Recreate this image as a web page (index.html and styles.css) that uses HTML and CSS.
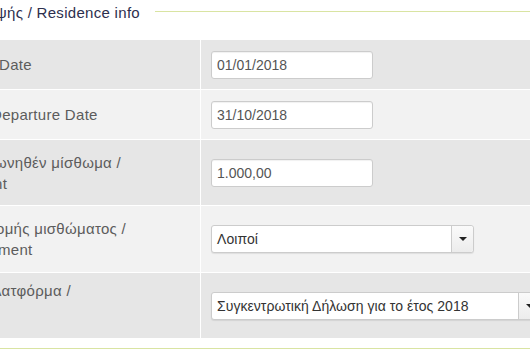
FILE: index.html
```html
<!DOCTYPE html>
<html lang="el">
<head>
<meta charset="utf-8">
<title>Residence info</title>
<link rel="stylesheet" href="styles.css">
</head>
<body>
<div class="page">
  <div class="legend">
    <span class="legend-text">ψής / Residence info</span>
    <span class="legend-line"></span>
  </div>
  <div class="form-table">
    <div class="row row-dark row-short">
      <div class="label"><span class="cut cut-d1">Date</span></div>
      <div class="field"><input class="input" type="text" value="01/01/2018"></div>
    </div>
    <div class="row row-light row-short">
      <div class="label"><span class="cut cut-d2">Departure Date</span></div>
      <div class="field"><input class="input" type="text" value="31/10/2018"></div>
    </div>
    <div class="row row-dark row-tall">
      <div class="label"><span class="cut cut-g1">ωνηθέν μίσθωμα /</span><span class="cut cut-e1">nt</span></div>
      <div class="field"><input class="input" type="text" value="1.000,00"></div>
    </div>
    <div class="row row-light row-tall row-4">
      <div class="label"><span class="cut cut-g2">ομής μισθώματος /</span><span class="cut cut-e2">ment</span></div>
      <div class="field">
        <div class="select select-mid">
          <span class="select-value">Λοιποί</span>
          <span class="select-btn"><span class="caret"></span></span>
        </div>
      </div>
    </div>
    <div class="row row-dark row-tall">
      <div class="label label-top"><span class="cut cut-g3">λατφόρμα /</span></div>
      <div class="field">
        <div class="select select-wide">
          <span class="select-value">Συγκεντρωτική Δήλωση για το έτος 2018</span>
          <span class="select-btn"><span class="caret"></span></span>
        </div>
      </div>
    </div>
  </div>
  <div class="footer-line"></div>
</div>
</body>
</html>
```

FILE: styles.css
```css
html, body {
  margin: 0;
  padding: 0;
  background: #ffffff;
  overflow: hidden;
}

body {
  font-family: "Liberation Sans", Arial, sans-serif;
  width: 530px;
  height: 363px;
}

.page {
  width: 530px;
  overflow: hidden;
}

.legend {
  display: flex;
  align-items: center;
  height: 25px;
  padding-bottom: 15px;
  gap: 15px;
}

.legend-text {
  font-size: 15px;
  color: #2d2f4e;
  margin-left: -4px;
  white-space: nowrap;
  line-height: 25px;
  letter-spacing: 0.3px;
}

.legend-line {
  flex: 1;
  height: 1px;
  background: #d9e4a2;
  margin-top: -3px;
}

.form-table {
  display: flex;
  flex-direction: column;
}

.row {
  display: grid;
  grid-template-columns: 200px 1fr;
  column-gap: 1px;
  background: #ffffff;
  border-bottom: 1px solid #ffffff;
}

.row-short { height: 49px; }
.row-tall { height: 65px; }
.row-4 { height: 66px; }

.row-dark .label,
.row-dark .field { background: #e6e6e6; }
.row-light .label,
.row-light .field { background: #f2f2f2; }

.label {
  display: flex;
  flex-direction: column;
  justify-content: center;
  font-size: 15px;
  line-height: 21px;
  letter-spacing: 0.3px;
  color: #5c5c5c;
  overflow: hidden;
  white-space: nowrap;
}

.label-top {
  justify-content: flex-start;
  padding-top: 7px;
}

.cut { display: block; }
.cut-d1 { margin-left: -1px; }
.cut-d2 { margin-left: -9px; }
.cut-g1 { margin-left: -5px; }
.cut-e1 { margin-left: -6px; }
.cut-g2 { margin-left: -4px; }
.cut-e2 { margin-left: -2px; }
.cut-g3 { margin-left: -6px; }

.field {
  display: flex;
  align-items: center;
  padding-left: 10px;
  overflow: hidden;
}

.input {
  box-sizing: border-box;
  width: 162px;
  height: 28px;
  margin: 0;
  padding: 0 5px;
  border: 1px solid #cccccc;
  border-radius: 3px;
  background: #ffffff;
  box-shadow: inset 0 1px 1px rgba(0,0,0,0.06);
  font-family: "Liberation Sans", Arial, sans-serif;
  font-size: 14px;
  color: #555555;
  outline: none;
}

.select {
  box-sizing: border-box;
  display: flex;
  align-items: stretch;
  height: 28px;
  border: 1px solid #cccccc;
  border-radius: 3px;
  background: #ffffff;
  box-shadow: 0 1px 1px rgba(0,0,0,0.08);
  flex-shrink: 0;
}

.select-mid { width: 263px; }
.select-wide { width: 330px; }

.select-value {
  flex: 1;
  display: flex;
  align-items: center;
  padding-left: 5px;
  font-size: 14px;
  letter-spacing: 0.05px;
  color: #333333;
  white-space: nowrap;
}

.select-btn {
  width: 21px;
  border-left: 1px solid #cccccc;
  background: linear-gradient(#fafafa, #ececec);
  border-radius: 0 3px 3px 0;
  display: flex;
  align-items: center;
  justify-content: center;
}

.caret {
  width: 0;
  height: 0;
  border-left: 4px solid transparent;
  border-right: 4px solid transparent;
  border-top: 4px solid #222222;
}

.footer-line {
  height: 1px;
  background: #d9e4a2;
  margin-top: 9px;
}
```
